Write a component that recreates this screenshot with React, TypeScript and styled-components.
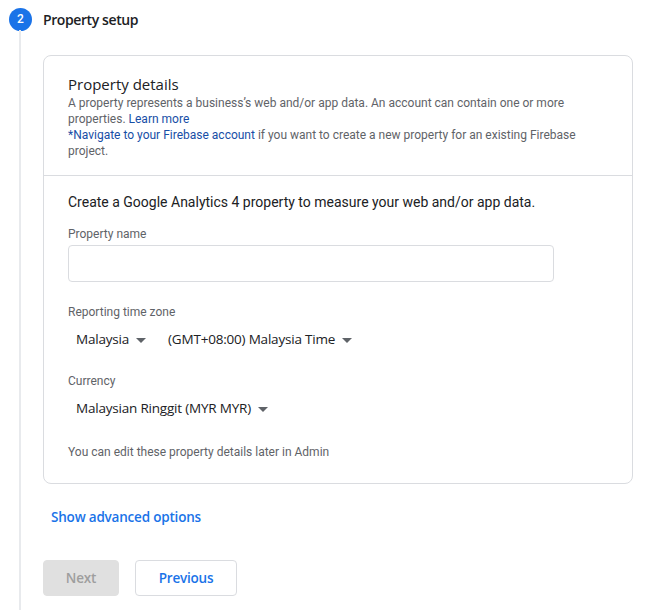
import React from "react";
import styled, { createGlobalStyle } from "styled-components";

const GlobalStyle = createGlobalStyle`
  html, body {
    margin: 0;
    padding: 0;
    background: #fff;
  }
  body {
    font-family: Roboto, "Liberation Sans", Arial, sans-serif;
    color: #202124;
  }
`;

const Page = styled.div`
  width: 660px;
  height: 610px;
  overflow: hidden;
  display: flex;
  flex-direction: column;
`;

const StepHeader = styled.div`
  display: flex;
  align-items: center;
  gap: 11px;
  padding: 8px 0 0 9px;
  height: 22px;
`;

const StepBadge = styled.div`
  width: 23px;
  height: 23px;
  border-radius: 50%;
  background: #1a73e8;
  color: #fff;
  font-size: 12px;
  font-weight: 500;
  display: flex;
  align-items: center;
  justify-content: center;
`;

const StepTitle = styled.div`
  font-family: "Open Sans", Roboto, sans-serif;
  font-size: 14px;
  font-weight: 600;
  color: #202124;
  letter-spacing: -0.4px;
`;

const StepBody = styled.div`
  margin-left: 19px;
  border-left: 2px solid #e8eaed;
  padding: 25px 0 20px 22px;
  flex: 1;
  display: flex;
  flex-direction: column;
`;

const Card = styled.div`
  width: 588px;
  border: 1px solid #dadce0;
  border-radius: 8px;
  display: flex;
  flex-direction: column;
`;

const CardHeader = styled.div`
  padding: 18px 24px 16px;
  border-bottom: 1px solid #dadce0;
`;

const CardTitle = styled.div`
  font-family: "Open Sans", Roboto, sans-serif;
  font-size: 15px;
  color: #202124;
  line-height: 20px;
  margin-bottom: 1px;
`;

const Description = styled.div`
  font-size: 12px;
  line-height: 16px;
  color: #5f6368;
`;

const Link = styled.a`
  color: #174ea6;
  text-decoration: none;
`;

const CardBody = styled.div`
  padding: 16px 24px 23px;
  display: flex;
  flex-direction: column;
`;

const Intro = styled.div`
  font-size: 14px;
  line-height: 20px;
  color: #202124;
  margin-bottom: 14px;
`;

const FieldLabel = styled.div<{ $gap?: number }>`
  font-size: 12px;
  line-height: 16px;
  color: #5f6368;
  margin-bottom: ${(p) => p.$gap ?? 4}px;
`;

const TextInput = styled.input`
  width: 486px;
  height: 37px;
  box-sizing: border-box;
  border: 1px solid #dadce0;
  border-radius: 4px;
  outline: none;
  margin-bottom: 22px;
  font-family: inherit;
  font-size: 14px;
`;

const SelectRow = styled.div<{ $gap: number }>`
  display: flex;
  align-items: center;
  gap: 22px;
  height: 28px;
  padding: 1px 0 0 8px;
  margin-bottom: ${(p) => p.$gap}px;
`;

const Select = styled.div`
  display: flex;
  align-items: center;
  gap: 7px;
  font-family: "Open Sans", Roboto, sans-serif;
  font-size: 13.5px;
  color: #202124;
  letter-spacing: -0.2px;
`;

const Caret = styled.span`
  width: 0;
  height: 0;
  border-left: 5px solid transparent;
  border-right: 5px solid transparent;
  border-top: 5px solid #5f6368;
  margin-top: 2px;
`;

const Note = styled.div`
  font-size: 12px;
  line-height: 16px;
  color: #5f6368;
`;

const AdvancedLink = styled.a`
  font-family: "Open Sans", Roboto, sans-serif;
  font-size: 13.5px;
  font-weight: 600;
  color: #1a73e8;
  letter-spacing: -0.2px;
  margin: 23px 0 0 8px;
  line-height: 20px;
`;

const Actions = styled.div`
  display: flex;
  gap: 16px;
  margin-top: 33px;
`;

const Button = styled.button<{ $primary?: boolean }>`
  height: 36px;
  box-sizing: border-box;
  padding: 0;
  border-radius: 4px;
  font-family: "Open Sans", Roboto, sans-serif;
  font-size: 13.5px;
  font-weight: 600;
  letter-spacing: -0.2px;
  border: 1px solid ${(p) => (p.$primary ? "#e0e0e0" : "#dadce0")};
  background: ${(p) => (p.$primary ? "#e0e0e0" : "#fff")};
  color: ${(p) => (p.$primary ? "#9e9e9e" : "#1a73e8")};
  width: ${(p) => (p.$primary ? "76px" : "102px")};
  cursor: pointer;
`;

export default function App() {
  return (
    <Page>
      <GlobalStyle />
      <StepHeader>
        <StepBadge>2</StepBadge>
        <StepTitle>Property setup</StepTitle>
      </StepHeader>
      <StepBody>
        <Card>
          <CardHeader>
            <CardTitle>Property details</CardTitle>
            <Description>
              A property represents a business’s web and/or app data. An account can contain one or more
              properties. <Link href="#">Learn more</Link>
              <br />
              <Link href="#">*Navigate to your Firebase account</Link> if you want to create a new property for an
              existing Firebase project.
            </Description>
          </CardHeader>
          <CardBody>
            <Intro>Create a Google Analytics 4 property to measure your web and/or app data.</Intro>
            <FieldLabel $gap={3}>Property name</FieldLabel>
            <TextInput />
            <FieldLabel>Reporting time zone</FieldLabel>
            <SelectRow $gap={20}>
              <Select>
                Malaysia <Caret />
              </Select>
              <Select>
                (GMT+08:00) Malaysia Time <Caret />
              </Select>
            </SelectRow>
            <FieldLabel>Currency</FieldLabel>
            <SelectRow $gap={22}>
              <Select>
                Malaysian Ringgit (MYR MYR) <Caret />
              </Select>
            </SelectRow>
            <Note>You can edit these property details later in Admin</Note>
          </CardBody>
        </Card>
        <AdvancedLink>Show advanced options</AdvancedLink>
        <Actions>
          <Button $primary disabled>
            Next
          </Button>
          <Button>Previous</Button>
        </Actions>
      </StepBody>
    </Page>
  );
}
